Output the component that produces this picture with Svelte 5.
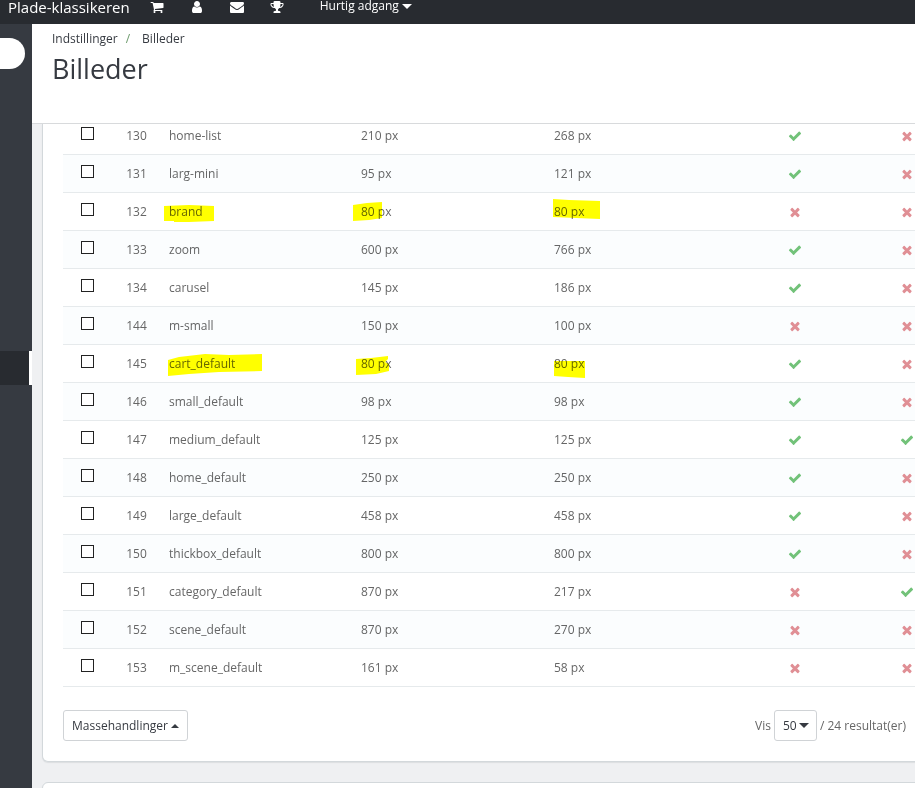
<script>
	// FontAwesome style glyphs on a 1792 grid
	const icons = {
		cart: 'M704 1536q0 52-38 90t-90 38-90-38-38-90 38-90 90-38 90 38 38 90zm896 0q0 52-38 90t-90 38-90-38-38-90 38-90 90-38 90 38 38 90zm128-1088v512q0 24-16.5 42.5t-40.5 21.5l-1044 122q13 60 13 70 0 16-24 64h920q26 0 45 19t19 45-19 45-45 19h-1024q-26 0-45-19t-19-45q0-11 8-31.5t16-36 21.5-40 15.5-29.5l-177-823h-204q-26 0-45-19t-19-45 19-45 45-19h256q16 0 28.5 6.5t19.5 15.5 13 24.5 8 26 5.5 29.5 4.5 26h1201q26 0 45 19t19 45z',
		user: 'M1536 1399q0 109-62.5 187t-150.5 78h-854q-88 0-150.5-78t-62.5-187q0-85 8.5-160.5t31.5-152 58.5-131 94-89 134.5-34.5q131 128 313 128t313-128q76 0 134.5 34.5t94 89 58.5 131 31.5 152 8.5 160.5zm-256-887q0 159-112.5 271.5t-271.5 112.5-271.5-112.5-112.5-271.5 112.5-271.5 271.5-112.5 271.5 112.5 112.5 271.5z',
		envelope: 'M1792 710v794q0 66-47 113t-113 47h-1472q-66 0-113-47t-47-113v-794q44 49 101 87 362 246 497 345 57 42 92.5 65.5t94.5 48 110 24.5h2q51 0 110-24.5t94.5-48 92.5-65.5q170-123 498-345 57-39 100-87zm0-294q0 79-49 151t-122 123q-376 261-468 325-10 7-42.5 31t-54 38.5-52 32.5-57.5 27-50 9h-2q-23 0-50-9t-57.5-27-52-32.5-54-38.5-42.5-31q-91-64-262-182.5t-205-142.5q-62-42-117-115.5t-55-136.5q0-78 41.5-130t118.5-52h1472q65 0 112.5 47t47.5 113z',
		trophy: 'M522 883q-74-162-74-371h-256v96q0 78 94.5 162t235.5 113zm1078-275v-96h-256q0 209-74 371 141-29 235.5-113t94.5-162zm128-128v128q0 71-41.5 143t-112 130-173 97.5-215.5 44.5q-42 54-95 95-38 34-52.5 72.5t-14.5 89.5q0 54 30.5 91t97.5 37q75 0 133.5 45.5t58.5 114.5v64q0 14-9 23t-23 9h-832q-14 0-23-9t-9-23v-64q0-69 58.5-114.5t133.5-45.5q67 0 97.5-37t30.5-91q0-51-14.5-89.5t-52.5-72.5q-53-41-95-95-113-5-215.5-44.5t-173-97.5-112-130-41.5-143v-128q0-40 28-68t68-28h288v-96q0-66 47-113t113-47h576q66 0 113 47t47 113v96h288q40 0 68 28t28 68z',
		check: 'M1671 566q0 40-28 68l-724 724-136 136q-28 28-68 28t-68-28l-136-136-362-362q-28-28-28-68t28-68l136-136q28-28 68-28t68 28l294 295 656-657q28-28 68-28t68 28l136 136q28 28 28 68z',
		times: 'M1490 1322q0 40-28 68l-136 136q-28 28-68 28t-68-28l-294-294-294 294q-28 28-68 28t-68-28l-136-136q-28-28-28-68t28-68l294-294-294-294q-28-28-28-68t28-68l136-136q28-28 68-28t68 28l294 294 294-294q28-28 68-28t68 28l136 136q28 28 28 68t-28 68l-294 294 294 294q28 28 28 68z'
	};

	const shortcuts = [
		{ icon: 'cart', label: 'Ordrer' },
		{ icon: 'user', label: 'Kunder' },
		{ icon: 'envelope', label: 'Beskeder' },
		{ icon: 'trophy', label: 'Trofæer' }
	];

	// marks: marker strokes, drawn from the top left corner of the cell's text
	const images = [
		{ id: 130, name: 'home-list', width: 210, height: 268, products: true, categories: false },
		{ id: 131, name: 'larg-mini', width: 95, height: 121, products: true, categories: false },
		{
			id: 132, name: 'brand', width: 80, height: 80, products: false, categories: false,
			marks: {
				name: 'M-5 3L20 2L45 3V18L20 19H5V18H-5z',
				width: 'M-8 2L6 0L21 -1V15L8 17L-8 18z',
				height: 'M-1 -4L15 -3L46 -2V16L22 15L-1 14z'
			}
		},
		{ id: 133, name: 'zoom', width: 600, height: 766, products: true, categories: false },
		{ id: 134, name: 'carusel', width: 145, height: 186, products: true, categories: false },
		{ id: 144, name: 'm-small', width: 150, height: 100, products: false, categories: false },
		{
			id: 145, name: 'cart_default', width: 80, height: 80, products: true, categories: false,
			marks: {
				name: 'M-1 5L10 2L36 -1L60 0L93 -1V16L50 17L20 19L-1 21z',
				width: 'M-5 4L10 3L27 1V4L24 7L28 9V16L15 19L-5 20z',
				height: 'M0 6H31V23L14 22L0 21z'
			}
		},
		{ id: 146, name: 'small_default', width: 98, height: 98, products: true, categories: false },
		{ id: 147, name: 'medium_default', width: 125, height: 125, products: true, categories: true },
		{ id: 148, name: 'home_default', width: 250, height: 250, products: true, categories: false },
		{ id: 149, name: 'large_default', width: 458, height: 458, products: true, categories: false },
		{ id: 150, name: 'thickbox_default', width: 800, height: 800, products: true, categories: false },
		{ id: 151, name: 'category_default', width: 870, height: 217, products: false, categories: true },
		{ id: 152, name: 'scene_default', width: 870, height: 270, products: false, categories: false },
		{ id: 153, name: 'm_scene_default', width: 161, height: 58, products: false, categories: false }
	];

	let page_size = $state('50');
</script>

{#snippet glyph(name)}
	<svg class="glyph" viewBox="0 0 1792 1792" aria-hidden="true"><path d={icons[name]} /></svg>
{/snippet}

{#snippet status(on)}
	<td class="status" class:on>{@render glyph(on ? 'check' : 'times')}</td>
{/snippet}

{#snippet marked(text, mark)}
	<span class="marked">
		{#if mark}
			<svg class="mark" width="1" height="1" aria-hidden="true"><path d={mark} /></svg>
		{/if}
		<span class="text">{text}</span>
	</span>
{/snippet}

<div class="app">
	<header class="topbar">
		<a class="shop" href="#shop">Plade-klassikeren</a>
		<nav class="shortcuts">
			{#each shortcuts as item}
				<a href="#{item.icon}" aria-label={item.label}>{@render glyph(item.icon)}</a>
			{/each}
		</nav>
		<button class="quick" type="button">Hurtig adgang<i class="caret"></i></button>
	</header>

	<div class="body">
		<aside class="sidebar">
			<input class="search" type="text" aria-label="Søg" />
			<a class="active" href="#settings" aria-label="Indstillinger"></a>
		</aside>

		<main>
			<div class="page-head">
				<nav class="breadcrumb">
					<a href="#settings">Indstillinger</a>
					<span class="slash">/</span>
					<a href="#images">Billeder</a>
				</nav>
				<h1>Billeder</h1>
			</div>

			<div class="content">
				<section class="panel">
					<table>
						<colgroup>
							<col class="col-check" />
							<col class="col-id" />
							<col class="col-name" />
							<col class="col-size" />
							<col class="col-size" />
							<col class="col-status" />
							<col class="col-status" />
						</colgroup>
						<tbody>
							{#each images as image (image.id)}
								<tr>
									<td class="pick"><input type="checkbox" aria-label={image.name} /></td>
									<td class="id">{image.id}</td>
									<td>{@render marked(image.name, image.marks?.name)}</td>
									<td>{@render marked(`${image.width} px`, image.marks?.width)}</td>
									<td>{@render marked(`${image.height} px`, image.marks?.height)}</td>
									{@render status(image.products)}
									{@render status(image.categories)}
								</tr>
							{/each}
						</tbody>
					</table>

					<div class="panel-foot">
						<button class="bulk" type="button">Massehandlinger<i class="caret up"></i></button>
						<div class="pager">
							<label for="page-size">Vis</label>
							<span class="select">
								<select id="page-size" bind:value={page_size}>
									<option>20</option>
									<option>50</option>
									<option>100</option>
								</select>
								<i class="caret"></i>
							</span>
							<span>/ 24 resultat(er)</span>
						</div>
					</div>
				</section>

				<section class="panel next"></section>
			</div>
		</main>
	</div>
</div>

<style>
	:global(body) {
		overflow: hidden;
	}

	.app {
		display: flex;
		flex-direction: column;
		height: 100vh;
		overflow: hidden;
		background: #eff0f2;
		color: #666;
		font: 12px/18px 'Open Sans', sans-serif;
	}

	a {
		color: inherit;
		text-decoration: none;
	}

	button,
	select {
		font: inherit;
		color: inherit;
	}

	.glyph {
		display: block;
		width: 14px;
		height: 14px;
		fill: currentColor;
	}

	.caret {
		display: inline-block;
		border: 5px solid transparent;
		border-top-color: currentColor;
		border-bottom-width: 0;
	}

	.caret.up {
		border-width: 0 4px 4px;
		border-bottom-color: currentColor;
	}

	.topbar {
		display: flex;
		flex: none;
		align-items: flex-start;
		height: 24px;
		padding-left: 8px;
		box-sizing: border-box;
		background: #282b30;
		color: #fff;
	}

	.shop {
		font-size: 15px;
		line-height: 14px;
	}

	.shortcuts {
		display: flex;
		gap: 26px;
		margin-left: 20px;
	}

	.quick {
		display: flex;
		align-items: center;
		gap: 3px;
		margin-left: 36px;
		padding: 0;
		border: 0;
		background: none;
		line-height: 12px;
	}

	.body {
		display: flex;
		flex: 1;
		min-height: 0;
	}

	.sidebar {
		display: flex;
		flex: none;
		flex-direction: column;
		width: 32px;
		padding-top: 14px;
		box-sizing: border-box;
		background: #363a41;
	}

	.search {
		width: 25px;
		height: 31px;
		padding: 0;
		border: 0;
		border-radius: 0 16px 16px 0;
		background: #fff;
	}

	.active {
		height: 34px;
		margin-top: 282px;
		border-right: 3px solid #fff;
		background: #282b30;
	}

	main {
		display: flex;
		flex: 1;
		flex-direction: column;
		min-width: 0;
	}

	.page-head {
		padding: 6px 20px 36px;
		border-bottom: 1px solid #d8dadc;
		background: #fff;
		color: #363a41;
	}

	.breadcrumb {
		display: flex;
	}

	.slash {
		margin: 0 12px 0 8px;
		color: #6c9a6c;
	}

	h1 {
		margin: 3px 0 0;
		font-size: 27px;
		font-weight: 400;
		line-height: 36px;
	}

	.content {
		display: flex;
		flex: 1;
		flex-direction: column;
		gap: 20px;
		min-height: 0;
		padding-left: 10px;
		overflow: hidden;
	}

	/* runs past the right edge, the page is scrolled sideways */
	.panel {
		flex: none;
		margin-right: -69px;
		padding: 0 20px 20px;
		border: 1px solid #d3d8db;
		border-top: 0;
		border-radius: 0 0 6px 6px;
		background: #fff;
		box-shadow: 0 1px 1px #dcdee0;
	}

	.panel.next {
		flex: 1;
		border-top: 1px solid #d3d8db;
		border-radius: 6px 6px 0 0;
	}

	/* first row is partly scrolled under the page head */
	table {
		width: 100%;
		margin-top: -7px;
		border-collapse: separate;
		border-spacing: 0;
		table-layout: fixed;
	}

	.col-check,
	.col-id {
		width: 49px;
	}

	.col-name {
		width: 192px;
	}

	.col-size {
		width: 193px;
	}

	.col-status {
		width: 112px;
	}

	td {
		height: 38px;
		padding: 0 8px;
		border-bottom: 1px solid #e6eaec;
		box-sizing: border-box;
	}

	tr:nth-child(even) td {
		background: #fbfdfe;
	}

	.id {
		text-align: center;
	}

	.pick {
		padding-bottom: 4px;
		text-align: center;
	}

	.pick input {
		display: block;
		width: 13px;
		height: 13px;
		margin: 0 auto;
		border: 1px solid #222;
		background: #fff;
		appearance: none;
	}

	.pick input:checked {
		background: #222;
	}

	.status {
		padding-top: 1px;
		color: #e08f95;
	}

	.status.on {
		color: #72c279;
	}

	.status .glyph {
		margin: 0 auto;
	}

	.marked {
		position: relative;
		display: inline-block;
	}

	.mark {
		position: absolute;
		top: 0;
		left: 0;
		overflow: visible;
		fill: #ff0;
	}

	.text {
		position: relative;
		mix-blend-mode: multiply;
	}

	.panel-foot {
		display: flex;
		align-items: center;
		justify-content: space-between;
		margin: 23px 57px 0 0;
	}

	.bulk {
		display: flex;
		align-items: center;
		gap: 3px;
		height: 31px;
		padding: 0 8px;
		border: 1px solid #d0d3d6;
		border-radius: 3px;
		background: #fff;
		color: #363a41;
	}

	.pager {
		display: flex;
		align-items: center;
		gap: 3px;
	}

	.select {
		position: relative;
		color: #363a41;
	}

	.select select {
		display: block;
		width: 43px;
		height: 31px;
		padding: 0 8px;
		border: 1px solid #d0d3d6;
		border-radius: 3px;
		background: #fff;
		appearance: none;
	}

	.select .caret {
		position: absolute;
		top: 13px;
		right: 8px;
		pointer-events: none;
	}
</style>
